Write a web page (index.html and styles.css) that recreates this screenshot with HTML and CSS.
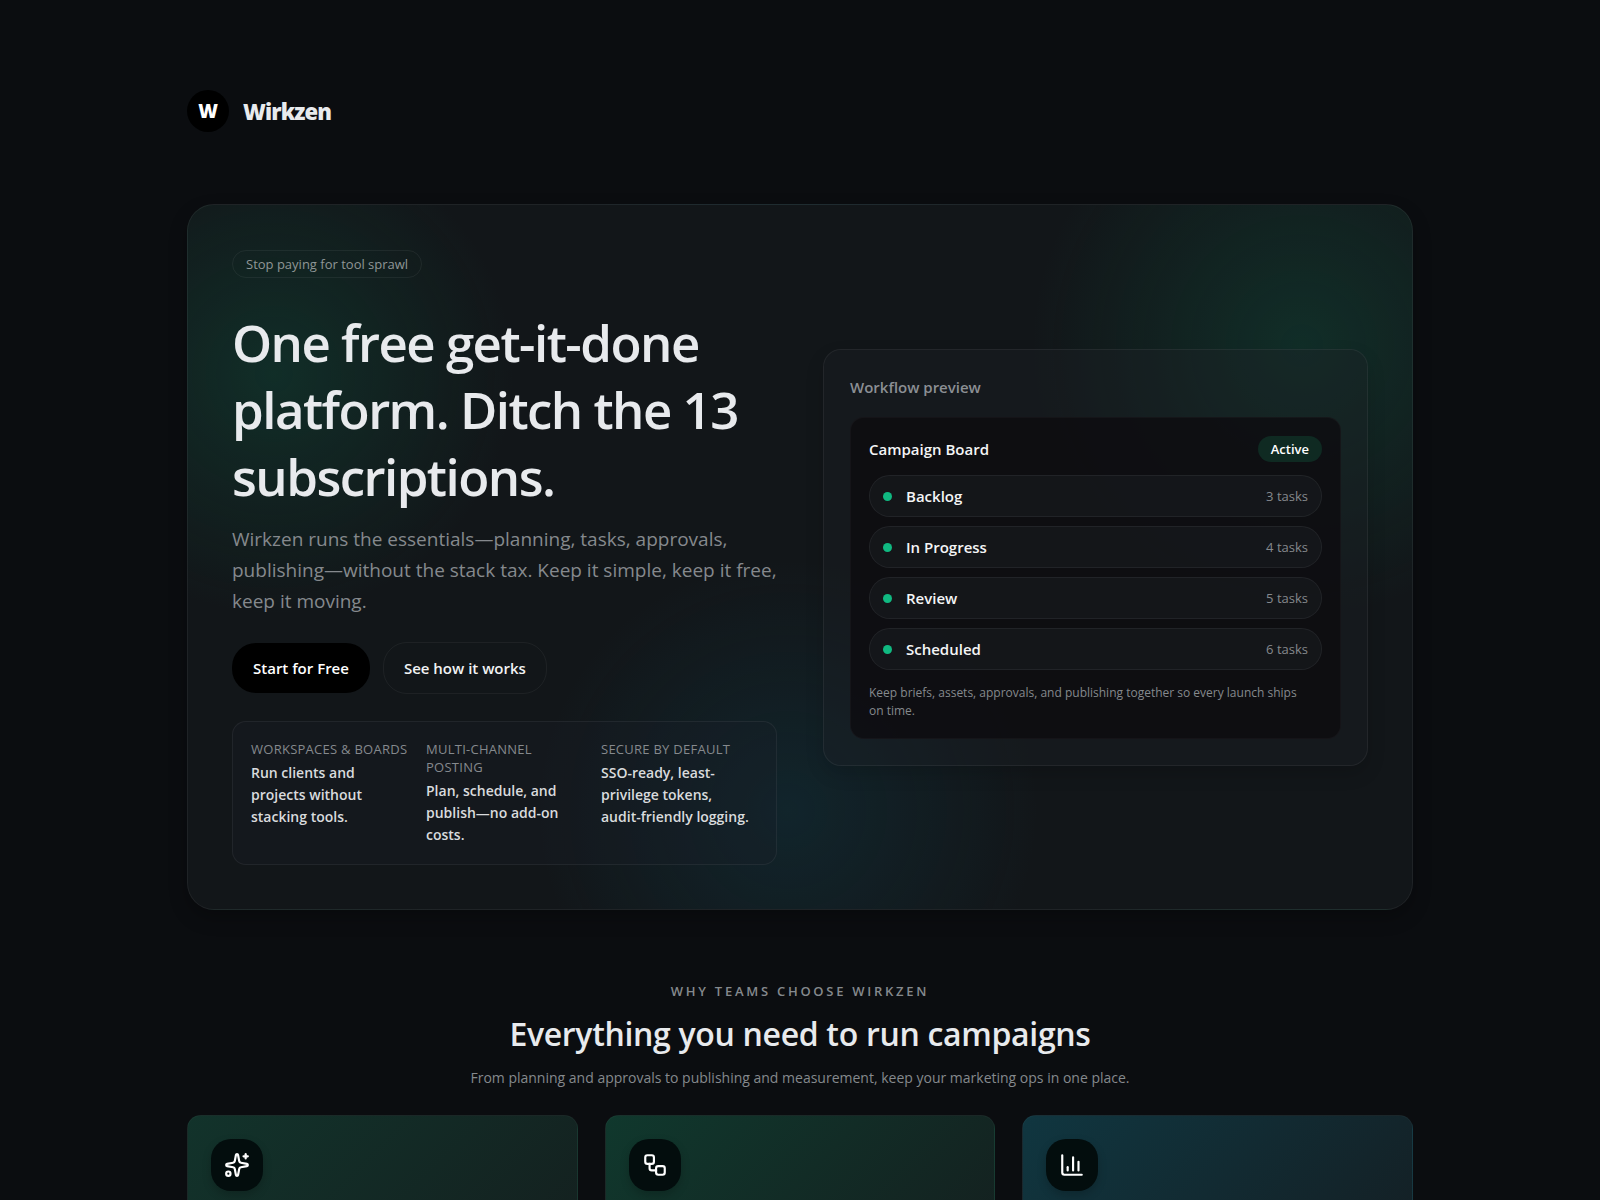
FILE: index.html
```html
<!DOCTYPE html>
<html lang="en">
<head>
    <meta charset="UTF-8">
    <meta name="viewport" content="width=device-width, initial-scale=1.0">
    <title>Wirkzen</title>
    <link rel="stylesheet" href="styles.css">
</head>
<body>
    <div class="page">
        <header class="brand">
            <span class="brand-mark">W</span>
            <span class="brand-name">Wirkzen</span>
        </header>

        <main>
            <section class="hero">
                <div class="hero-copy">
                    <span class="pill">Stop paying for tool sprawl</span>
                    <h1>One free get-it-done platform. Ditch the 13 subscriptions.</h1>
                    <p class="lead">Wirkzen runs the essentials—planning, tasks, approvals, publishing—without the stack tax. Keep it simple, keep it free, keep it moving.</p>
                    <div class="actions">
                        <button type="button" class="btn btn-primary">Start for Free</button>
                        <button type="button" class="btn btn-ghost">See how it works</button>
                    </div>
                    <dl class="stats">
                        <div>
                            <dt>Workspaces &amp; Boards</dt>
                            <dd>Run clients and projects without stacking tools.</dd>
                        </div>
                        <div>
                            <dt>Multi-channel posting</dt>
                            <dd>Plan, schedule, and publish—no add-on costs.</dd>
                        </div>
                        <div>
                            <dt>Secure by default</dt>
                            <dd>SSO-ready, least-privilege tokens, <span class="nowrap">audit-friendly</span> logging.</dd>
                        </div>
                    </dl>
                </div>

                <div class="preview">
                    <p class="preview-title">Workflow preview</p>
                    <div class="board">
                        <div class="board-head">
                            <span>Campaign Board</span>
                            <span class="badge">Active</span>
                        </div>
                        <ul class="lanes">
                            <li><span class="dot"></span>Backlog<span class="count">3 tasks</span></li>
                            <li><span class="dot"></span>In Progress<span class="count">4 tasks</span></li>
                            <li><span class="dot"></span>Review<span class="count">5 tasks</span></li>
                            <li><span class="dot"></span>Scheduled<span class="count">6 tasks</span></li>
                        </ul>
                        <p class="board-note">Keep briefs, assets, approvals, and publishing together so every launch ships <span class="nowrap">on time.</span></p>
                    </div>
                </div>
            </section>

            <section class="features">
                <p class="eyebrow">Why teams choose Wirkzen</p>
                <h2>Everything you need to run campaigns</h2>
                <p class="sub">From planning and approvals to publishing and measurement, keep your marketing ops in one place.</p>

                <div class="cards">
                    <article class="card card-teal">
                        <span class="card-icon">
                            <svg viewBox="0 0 24 24" aria-hidden="true">
                                <path d="M11.017 2.814a1 1 0 0 1 1.966 0l1.051 5.558a2 2 0 0 0 1.594 1.594l5.558 1.051a1 1 0 0 1 0 1.966l-5.558 1.051a2 2 0 0 0-1.594 1.594l-1.051 5.558a1 1 0 0 1-1.966 0l-1.051-5.558a2 2 0 0 0-1.594-1.594l-5.558-1.051a1 1 0 0 1 0-1.966l5.558-1.051a2 2 0 0 0 1.594-1.594z"/>
                                <path d="M20 2v4"/>
                                <path d="M22 4h-4"/>
                                <circle cx="4" cy="20" r="2"/>
                            </svg>
                        </span>
                    </article>
                    <article class="card card-green">
                        <span class="card-icon">
                            <svg viewBox="0 0 24 24" aria-hidden="true">
                                <rect x="3" y="3" width="8" height="8" rx="2"/>
                                <path d="M7 11v4a2 2 0 0 0 2 2h4"/>
                                <rect x="13" y="13" width="8" height="8" rx="2"/>
                            </svg>
                        </span>
                    </article>
                    <article class="card card-blue">
                        <span class="card-icon">
                            <svg viewBox="0 0 24 24" aria-hidden="true">
                                <path d="M3 3v16a2 2 0 0 0 2 2h16"/>
                                <path d="M18 17V9"/>
                                <path d="M13 17V5"/>
                                <path d="M8 17v-3"/>
                            </svg>
                        </span>
                    </article>
                </div>
            </section>
        </main>
    </div>
</body>
</html>
```
FILE: styles.css
```css
* {
    box-sizing: border-box;
    margin: 0;
    padding: 0;
}

body {
    font-family: "Open Sans", "Noto Sans", sans-serif;
    font-size: 15px;
    line-height: 22px;
    background-color: #0b0d10;
    color: #e8eaed;
}

.page {
    max-width: 1280px;
    margin: 0 auto;
    padding: 90px 27px 0;
}

.nowrap {
    white-space: nowrap;
}

.brand {
    display: flex;
    align-items: center;
    gap: 14px;
    margin-bottom: 72px;
}

.brand-mark {
    width: 42px;
    height: 42px;
    border-radius: 50%;
    background-color: #000;
    color: #fff;
    font-size: 19px;
    font-weight: 800;
    line-height: 42px;
    text-align: center;
}

.brand-name {
    font-size: 22px;
    font-weight: 800;
    letter-spacing: -0.04em;
}

.hero {
    display: grid;
    grid-template-columns: 1fr 1fr;
    gap: 46px;
    align-items: center;
    padding: 45px 44px 44px;
    border: 1px solid rgba(255, 255, 255, 0.06);
    border-radius: 27px;
    background:
        radial-gradient(circle at 7% 24%, rgba(14, 110, 80, 0.27), transparent 240px),
        radial-gradient(circle at 91% 20%, rgba(14, 110, 80, 0.27), transparent 270px),
        radial-gradient(circle at 49% 86%, rgba(14, 85, 105, 0.23), transparent 250px),
        #121619;
    box-shadow: 0 8px 18px rgba(0, 0, 0, 0.25);
}

.pill {
    display: inline-block;
    padding: 0 13px;
    border: 1px solid rgba(255, 255, 255, 0.06);
    border-radius: 14px;
    color: #8f9696;
    font-size: 13px;
    font-weight: 500;
    line-height: 26px;
}

h1 {
    margin-top: 31px;
    font-size: 51px;
    font-weight: 600;
    line-height: 67px;
    letter-spacing: -0.03em;
}

.lead {
    margin-top: 14px;
    color: #85898d;
    font-size: 19px;
    line-height: 31px;
}

.actions {
    display: flex;
    align-items: center;
    gap: 13px;
    margin-top: 25px;
}

.btn {
    padding: 13px 20px;
    border: 1px solid transparent;
    border-radius: 24px;
    font-family: inherit;
    font-size: 15px;
    font-weight: 600;
    line-height: 24px;
    cursor: pointer;
}

.btn-primary {
    padding: 12px 20px;
    background-color: #000;
    color: #fff;
}

.btn-ghost {
    background-color: transparent;
    border-color: rgba(255, 255, 255, 0.05);
    color: #f1f2f3;
}

.stats {
    display: grid;
    grid-template-columns: repeat(3, 1fr);
    gap: 18px;
    margin-top: 27px;
    padding: 18px;
    border: 1px solid rgba(255, 255, 255, 0.06);
    border-radius: 14px;
    background-color: rgba(28, 31, 40, 0.3);
}

.stats dt {
    color: #85898d;
    font-size: 13px;
    line-height: 18px;
    letter-spacing: 0.02em;
    text-transform: uppercase;
}

.stats dd {
    margin-top: 4px;
    color: #d9dbdd;
    font-size: 14px;
    font-weight: 600;
}

.preview {
    padding: 26px;
    border: 1px solid rgba(255, 255, 255, 0.06);
    border-radius: 18px;
    background-color: rgba(28, 32, 38, 0.35);
    box-shadow: 0 8px 18px rgba(0, 0, 0, 0.15);
}

.preview-title {
    color: #8b8f94;
    font-weight: 600;
}

.board {
    margin-top: 19px;
    padding: 18px;
    border: 1px solid rgba(255, 255, 255, 0.03);
    border-radius: 14px;
    background-color: rgba(12, 11, 15, 0.8);
}

.board-head {
    display: flex;
    align-items: center;
    justify-content: space-between;
    color: #f4f5f6;
    font-weight: 600;
}

.badge {
    padding: 0 13px;
    border-radius: 13px;
    background-color: #0f2a22;
    color: #fff;
    font-size: 13px;
    line-height: 26px;
}

.lanes {
    display: grid;
    gap: 9px;
    margin-top: 13px;
    list-style: none;
}

.lanes li {
    display: flex;
    align-items: center;
    gap: 14px;
    padding: 9px 13px;
    border: 1px solid rgba(255, 255, 255, 0.06);
    border-radius: 21px;
    background-color: rgba(26, 30, 34, 0.5);
    color: #f4f5f6;
    font-weight: 600;
}

.dot {
    width: 9px;
    height: 9px;
    border-radius: 50%;
    background-color: #10b981;
}

.count {
    margin-left: auto;
    color: #85898d;
    font-size: 13px;
    font-weight: 400;
}

.board-note {
    margin-top: 14px;
    color: #85898d;
    font-size: 12px;
    line-height: 18px;
}

.features {
    margin-top: 72px;
    text-align: center;
}

.eyebrow {
    color: #85898d;
    font-size: 13px;
    font-weight: 600;
    line-height: 18px;
    letter-spacing: 0.21em;
    text-transform: uppercase;
}

h2 {
    margin-top: 11px;
    font-size: 32px;
    font-weight: 600;
    line-height: 46px;
    letter-spacing: -0.01em;
}

.sub {
    margin-top: 10px;
    color: #85898d;
    font-size: 14px;
}

.cards {
    display: grid;
    grid-template-columns: repeat(3, 1fr);
    gap: 27px;
    margin-top: 26px;
}

.card {
    height: 260px;
    padding: 23px;
    border: 1px solid rgba(255, 255, 255, 0.03);
    border-radius: 14px;
    text-align: left;
}

.card-teal {
    background: linear-gradient(135deg, #12332b, #14201f 80%);
}

.card-green {
    background: linear-gradient(135deg, #10382d, #14201f 80%);
}

.card-blue {
    background: linear-gradient(135deg, #103640, #141f24 80%);
}

.card-icon {
    display: grid;
    place-items: center;
    width: 52px;
    height: 52px;
    border-radius: 20px;
    background-color: #030d0d;
    box-shadow: 0 4px 10px rgba(0, 0, 0, 0.2);
}

.card-icon svg {
    width: 26px;
    height: 26px;
    fill: none;
    stroke: #fff;
    stroke-width: 2;
    stroke-linecap: round;
    stroke-linejoin: round;
}
```
